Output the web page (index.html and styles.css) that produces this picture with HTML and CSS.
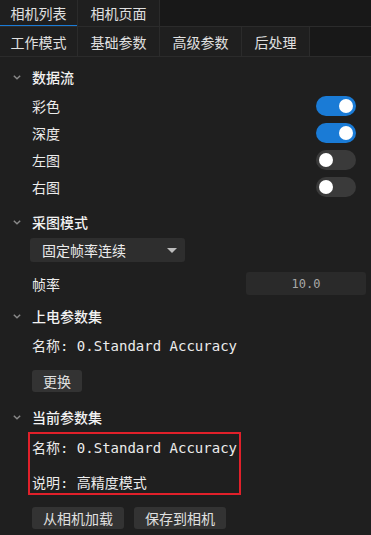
FILE: index.html
```html
<!DOCTYPE html>
<html lang="zh">
<head>
<meta charset="utf-8">
<link rel="stylesheet" href="styles.css">
</head>
<body>
<div class="tabbar top">
  <div class="tab active">相机列表</div>
  <div class="tab">相机页面</div>
</div>
<div class="tabbar sub">
  <div class="tab">工作模式</div>
  <div class="tab">基础参数</div>
  <div class="tab">高级参数</div>
  <div class="tab short">后处理</div>
</div>
<div class="content">
  <div class="section">
    <div class="header"><svg class="chev" width="8" height="5" viewBox="0 0 8 5"><path d="M0.8 0.8 L4 3.8 L7.2 0.8" fill="none" stroke="#8a8a8a" stroke-width="1.4"/></svg><span>数据流</span></div>
    <div class="row"><span>彩色</span><span class="toggle on"></span></div>
    <div class="row"><span>深度</span><span class="toggle on"></span></div>
    <div class="row"><span>左图</span><span class="toggle"></span></div>
    <div class="row"><span>右图</span><span class="toggle"></span></div>
  </div>
  <div class="section s2">
    <div class="header"><svg class="chev" width="8" height="5" viewBox="0 0 8 5"><path d="M0.8 0.8 L4 3.8 L7.2 0.8" fill="none" stroke="#8a8a8a" stroke-width="1.4"/></svg><span>采图模式</span></div>
    <div class="select"><span>固定帧率连续</span><span class="caret"></span></div>
    <div class="row fr"><span>帧率</span><span class="num">10.0</span></div>
  </div>
  <div class="section s3">
    <div class="header"><svg class="chev" width="8" height="5" viewBox="0 0 8 5"><path d="M0.8 0.8 L4 3.8 L7.2 0.8" fill="none" stroke="#8a8a8a" stroke-width="1.4"/></svg><span>上电参数集</span></div>
    <div class="row mono">名称: 0.Standard Accuracy</div>
    <div class="btns"><span class="btn">更换</span></div>
  </div>
  <div class="section s4">
    <div class="header"><svg class="chev" width="8" height="5" viewBox="0 0 8 5"><path d="M0.8 0.8 L4 3.8 L7.2 0.8" fill="none" stroke="#8a8a8a" stroke-width="1.4"/></svg><span>当前参数集</span></div>
    <div class="redbox">
      <div class="line mono">名称: 0.Standard Accuracy</div>
      <div class="line mono l2">说明: 高精度模式</div>
    </div>
    <div class="btns b2"><span class="btn">从相机加载</span><span class="btn">保存到相机</span></div>
  </div>
</div>
</body>
</html>
```

FILE: styles.css
```css
html, body {
  margin: 0;
  padding: 0;
  background: #1f1f1f;
  color: #ececec;
  font-family: "Noto Sans CJK SC", "Noto Sans", sans-serif;
  font-size: 14px;
}
.tabbar {
  display: flex;
  background: #181818;
  border-bottom: 1px solid #2b2b2b;
}
.tabbar.top { height: 26px; }
.tabbar.sub { height: 29px; }
.tab {
  border-right: 1px solid #2b2b2b;
  display: flex;
  align-items: center;
  justify-content: center;
  background: #1f1f1f;
  color: #e0e0e0;
  box-sizing: border-box;
  width: 78px;
  line-height: 1;
}
.tabbar.sub .tab { width: 82px; }
.tabbar.sub .tab:first-child { width: 78px; }
.tabbar.sub .tab.short { width: 68px; }
.tabbar.top .tab:nth-child(2) { width: 82px; }
.tab.active {
  box-shadow: inset 0 -1px 0 #1a7bd6;
}
.content {
  padding-top: 5px;
}
.header {
  height: 30px;
  display: flex;
  align-items: center;
  font-weight: 500;
  color: #f2f2f2;
}
.chev {
  margin-left: 13px;
  margin-right: 11px;
}
.row {
  height: 27px;
  display: flex;
  align-items: center;
  justify-content: space-between;
  padding-left: 32px;
  padding-right: 15px;
}
.toggle {
  width: 40px;
  height: 20px;
  border-radius: 10px;
  background: #3a3a3a;
  position: relative;
}
.toggle::after {
  content: "";
  position: absolute;
  top: 3px;
  left: 3px;
  width: 14px;
  height: 14px;
  border-radius: 50%;
  background: #ffffff;
}
.toggle.on { background: #1a7bd6; }
.toggle.on::after { left: 23px; }
.s2 { margin-top: 7px; }
.select {
  margin-left: 30px;
  width: 155px;
  height: 24px;
  margin-top: 1px;
  background: #2e2e2e;
  border-radius: 3px;
  display: flex;
  align-items: center;
  justify-content: space-between;
  padding: 0 8px 0 12px;
  box-sizing: border-box;
}
.caret {
  width: 0;
  height: 0;
  border-left: 5px solid transparent;
  border-right: 5px solid transparent;
  border-top: 5px solid #bdbdbd;
}
.row.fr {
  margin-top: 8px;
  padding-right: 5px;
}
.num {
  width: 120px;
  height: 23px;
  background: #2a2a2a;
  border-radius: 3px;
  display: flex;
  align-items: center;
  justify-content: center;
  font-family: "DejaVu Sans Mono", monospace;
  font-size: 12px;
  color: #a8a8a8;
}
.s3 { margin-top: 4px; }
.mono {
  font-family: "DejaVu Sans Mono", "Noto Sans CJK SC", monospace;
  font-size: 14px;
}
.btns {
  padding-left: 32px;
  margin-top: 12px;
  display: flex;
  gap: 10px;
}
.btn {
  height: 22px;
  padding: 0 11px;
  background: #333333;
  border-radius: 3px;
  display: flex;
  align-items: center;
  color: #e0e0e0;
}
.s4 { margin-top: 10px; }
.redbox {
  margin-left: 28px;
  width: 213px;
  height: 63px;
  border: 2px solid #e0202a;
  box-sizing: border-box;
  padding-left: 2px;
}
.line {
  height: 20px;
  display: flex;
  align-items: center;
  margin-top: 3px;
}
.line.l2 { margin-top: 15px; }
.btns.b2 { margin-top: 12px; }
```
